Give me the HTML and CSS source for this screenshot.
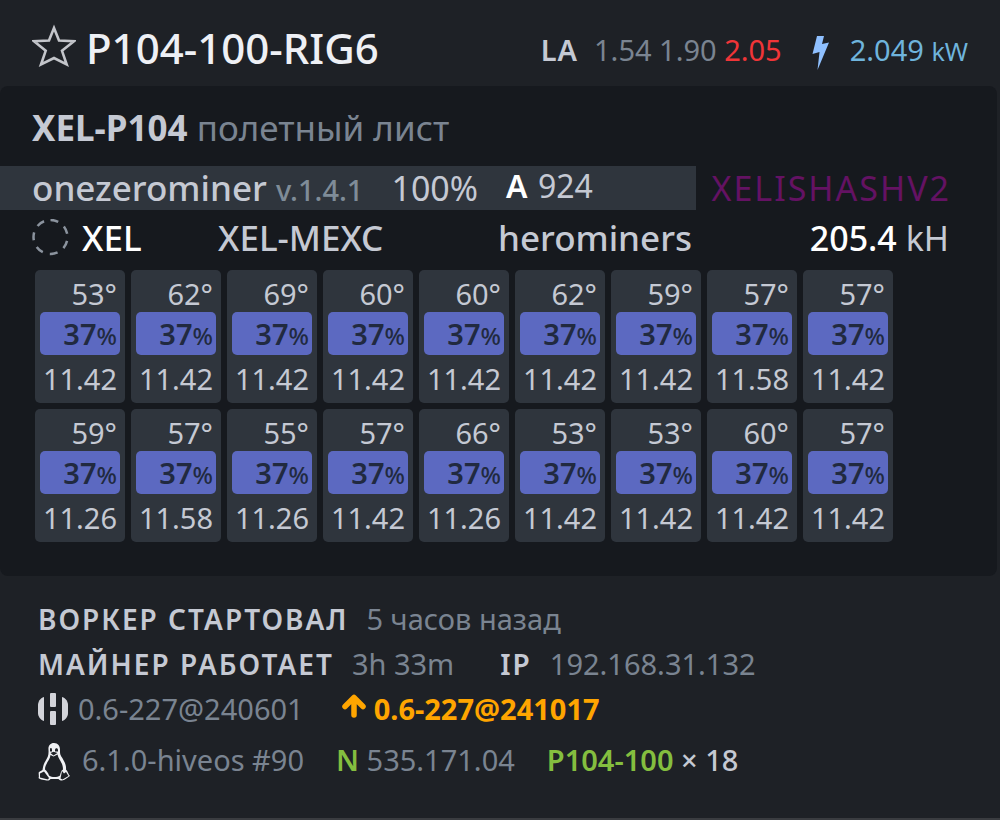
FILE: index.html
```
<!DOCTYPE html>
<html lang="ru">

<head>
    <meta charset="UTF-8">
    <meta name="viewport" content="width=device-width, initial-scale=1.0">
    <title>P104-100-RIG6</title>

    <link rel="stylesheet" href="styles.css">
</head>

<body>
    <header class="header">
        <button class="star" type="button" aria-label="Favorite">
            <svg width="44" height="44" viewBox="0 0 44 44" fill="none" stroke="currentColor" stroke-width="2.600">
                <path d="M22 4l5 12.500 15 .8-12 9.500 4.700 13.700L22 34l-13 6.500 4.700-13.700L2 17.300l15-.8z" />
            </svg>
        </button>
        <h1 class="title">P104-100-RIG6</h1>
        <div class="load">
            <span class="load-label">LA</span>
            <span class="load-values">1.54 1.90 <span class="danger">2.05</span></span>
        </div>
        <div class="power">
            <svg width="18" height="34" viewBox="0 0 18 34" fill="currentColor">
                <path d="M5 0h7L10 8l7-1.500L5.500 34 7.500 16l-7 2z" />
            </svg>
            <span>2.049 <small class="unit">kW</small></span>
        </div>
    </header>

    <main class="panel">
        <h2 class="sheet"><strong>XEL-P104</strong> полетный лист</h2>

        <div class="miner">
            <div class="miner-bar">
                <span class="miner-name">onezerominer <small class="version">v.1.4.1</small></span>
                <span class="percent">100%</span>
                <span class="shares"><b>A</b> 924</span>
            </div>
            <span class="algo">XELISHASHV2</span>
        </div>

        <div class="coin">
            <svg class="coin-icon" width="38" height="38" viewBox="0 0 38 38" fill="none" stroke="currentColor" stroke-width="2.500">
                <circle cx="18.500" cy="18" r="17" stroke-dasharray="8 7.260" transform="rotate(-90 18.500 18)" />
            </svg>
            <span class="coin-name">XEL</span>
            <span>XEL-MEXC</span>
            <span>herominers</span>
            <span class="hashrate"><b>205.4</b> kH</span>
        </div>

        <div class="gpus">
            <div class="gpu"><span>53°</span><span class="fan">37<small>%</small></span><span>11.42</span></div>
            <div class="gpu"><span>62°</span><span class="fan">37<small>%</small></span><span>11.42</span></div>
            <div class="gpu"><span>69°</span><span class="fan">37<small>%</small></span><span>11.42</span></div>
            <div class="gpu"><span>60°</span><span class="fan">37<small>%</small></span><span>11.42</span></div>
            <div class="gpu"><span>60°</span><span class="fan">37<small>%</small></span><span>11.42</span></div>
            <div class="gpu"><span>62°</span><span class="fan">37<small>%</small></span><span>11.42</span></div>
            <div class="gpu"><span>59°</span><span class="fan">37<small>%</small></span><span>11.42</span></div>
            <div class="gpu"><span>57°</span><span class="fan">37<small>%</small></span><span>11.58</span></div>
            <div class="gpu"><span>57°</span><span class="fan">37<small>%</small></span><span>11.42</span></div>
            <div class="gpu"><span>59°</span><span class="fan">37<small>%</small></span><span>11.26</span></div>
            <div class="gpu"><span>57°</span><span class="fan">37<small>%</small></span><span>11.58</span></div>
            <div class="gpu"><span>55°</span><span class="fan">37<small>%</small></span><span>11.26</span></div>
            <div class="gpu"><span>57°</span><span class="fan">37<small>%</small></span><span>11.42</span></div>
            <div class="gpu"><span>66°</span><span class="fan">37<small>%</small></span><span>11.26</span></div>
            <div class="gpu"><span>53°</span><span class="fan">37<small>%</small></span><span>11.42</span></div>
            <div class="gpu"><span>53°</span><span class="fan">37<small>%</small></span><span>11.42</span></div>
            <div class="gpu"><span>60°</span><span class="fan">37<small>%</small></span><span>11.42</span></div>
            <div class="gpu"><span>57°</span><span class="fan">37<small>%</small></span><span>11.42</span></div>
        </div>
    </main>

    <footer class="info">
        <div class="row">
            <span class="label">ВОРКЕР СТАРТОВАЛ</span>
            <span>5 часов назад</span>
        </div>
        <div class="row">
            <span class="label">МАЙНЕР РАБОТАЕТ</span>
            <span>3h 33m</span>
            <span class="label ip">IP</span>
            <span>192.168.31.132</span>
        </div>
        <div class="row versions">
            <svg width="30" height="32" viewBox="0 0 30 32" fill="#d3d4da">
                <path d="M6 4v24C2 27 0 23 0 20v-8c0-3 2-7 6-8z" />
                <path d="M24 4v24c4-1 6-5 6-8v-8c0-3-2-7-6-8z" />
                <rect x="12" y="0" width="6" height="14" rx="1" />
                <rect x="12" y="18" width="6" height="14" rx="1" />
            </svg>
            <span>0.6-227@240601</span>
            <span class="update">
                <svg width="24" height="24" viewBox="0 0 24 24" fill="none" stroke="currentColor" stroke-width="5.500" stroke-linecap="round" stroke-linejoin="round">
                    <path d="M12 4v17M3 12.500L12 3.500l9 9" />
                </svg>
                0.6-227@241017
            </span>
        </div>
        <div class="row system">
            <svg class="tux" width="32" height="38" viewBox="0 0 32 38">
                <path fill="#f0f1f4" d="M16 0c-4 0-6 3-5.500 7 .3 5-.5 7-3 11-2 3-2.500 6-3 9L1 29c-1 1 .5 4-.5 6 1 1.500 7 2.500 9 2.500 1.500 0 2-.5 3-1.500h8c1 1 2 1.500 3.500 1.500 2 0 6-3 8-4.500-2-1.500-2-5-4-6.500.5-5-2-8.500-4-12-2-3-2-4-2-7.500 0-4-2-7-6-7z" />
                <path fill="#1e2126" d="M12.500 12l3 1.500 4-2c1 5 5.500 8 5.500 15-2 1-2.500 4-3 6-3 2-8 2-11 0-1-3-2-4-4-6 0-6 5-9 5.500-14.500z" />
                <path fill="#1e2126" d="M2 30.500l4-2 5 6.500-1 1.500-8-2zM24 28l2 2.500 2-1.500 2.500 4-6 3.500-2-1z" />
                <path fill="#1e2126" d="M12 6.500c0-2 2-2 2 .5v1.500h-2zM17 7c0-2.500 3-2.500 3 0v1.500h-3zM12.500 10l3-1.200 4 1.200-4 2.500z" />
            </svg>
            <span>6.1.0-hiveos #90</span>
            <span class="driver"><b class="green">N</b> 535.171.04</span>
            <span class="cards"><b class="green">P104-100</b> × 18</span>
        </div>
    </footer>
</body>

</html>
```
FILE: styles.css
```
* {
    box-sizing: border-box;
}

body {
    margin: 0;
    min-height: 100vh;
    background: #1e2126;
    color: #7a8491;
    font-family: "Noto Sans", sans-serif;
    font-size: 29px;
    line-height: 44px;
    white-space: nowrap;
    border-bottom: 2px solid #3a3c40;
}

b {
    font-weight: 600;
}

svg {
    display: block;
    flex: none;
}

/* Header */

.header {
    display: flex;
    align-items: center;
    height: 86px;
    padding: 14px 32px 0;
}

.star {
    margin: 0 10px 8px 0;
    padding: 0;
    border: 0;
    background: none;
    color: #c3c5ca;
    cursor: pointer;
}

.title {
    margin: 0 auto 4px 0;
    color: #eef0f5;
    font-size: 42px;
    font-weight: 500;
}

.load {
    display: flex;
    gap: 16px;
}

.load-label {
    color: #c5c9d3;
    font-weight: 600;
    letter-spacing: 1px;
}

.danger {
    color: #f03538;
}

.power {
    display: flex;
    align-items: center;
    gap: 20px;
    margin-left: 30px;
    color: #6fb4dc;
}

.power svg {
    margin-top: 6px;
    color: #8fc0ff;
}

.unit {
    font-size: 25px;
}

/* Miner panel */

.panel {
    margin-right: 3px;
    padding: 20px 0 34px;
    border-radius: 8px;
    background: #16191e;
}

.sheet {
    margin: 0;
    padding: 0 32px 16px;
    font-size: 35px;
    font-weight: 400;
}

.sheet strong {
    color: #c5c9d3;
}

.miner {
    display: flex;
    height: 44px;
    color: #c5c9d3;
    font-size: 34px;
}

.miner-bar {
    display: flex;
    flex: 1;
    gap: 28px;
    padding-left: 32px;
    background: #2f353d;
}

.miner-name {
    font-size: 35px;
    font-weight: 500;
}

.version {
    color: #7f8c98;
    font-size: 29px;
}

.shares {
    font-size: 32px;
    line-height: 40px;
}

.shares b {
    margin-right: 2px;
    color: #fff;
}

.algo {
    padding: 0 46px 0 16px;
    color: #641263;
    letter-spacing: 2px;
}

.coin {
    display: grid;
    grid-template-columns: 38px 124px 268px 1fr auto;
    column-gap: 12px;
    align-items: center;
    height: 60px;
    padding: 0 48px 4px 32px;
    color: #c5c9d3;
    font-size: 35px;
    font-weight: 500;
}

.coin-icon {
    color: #8b939e;
}

.coin-name,
.hashrate b {
    color: #fff;
    font-weight: 500;
}

.hashrate {
    font-size: 34px;
    font-weight: 400;
}

/* GPU cards */

.gpus {
    display: grid;
    grid-template-columns: repeat(9, 90px);
    gap: 6px;
    padding-left: 35px;
}

.gpu {
    display: flex;
    flex-direction: column;
    height: 133px;
    padding: 0 5px;
    border-radius: 5px;
    background: #2f353d;
    color: #c5c9d3;
    text-align: right;
}

.gpu span {
    padding-right: 3px;
    line-height: 48px;
}

.gpu span:first-child {
    height: 42px;
}

.gpu .fan {
    height: 43px;
    border-radius: 5px;
    background: #5c69c1;
    color: #212a40;
    font-weight: 600;
    line-height: 43px;
}

.fan small {
    font-size: 24px;
    font-weight: 500;
}

/* Worker info */

.info {
    padding: 20px 38px;
}

.row {
    display: flex;
    align-items: center;
    gap: 18px;
    height: 45px;
}

.label {
    color: #c5c9d3;
    font-size: 28px;
    font-weight: 600;
    letter-spacing: 2px;
}

.ip {
    margin-left: 28px;
}

.versions {
    gap: 10px;
}

.update {
    display: flex;
    align-items: center;
    gap: 8px;
    margin-left: 28px;
    color: #ffa500;
    font-weight: 700;
}

.update svg {
    margin-bottom: 6px;
}

.system {
    gap: 12px;
    height: 58px;
}

.tux {
    margin-top: 4px;
}

.driver {
    margin-left: 20px;
}

.green {
    color: #84be3f;
}

.cards {
    margin-left: 20px;
    color: #c5c9d3;
    font-weight: 500;
}
```
